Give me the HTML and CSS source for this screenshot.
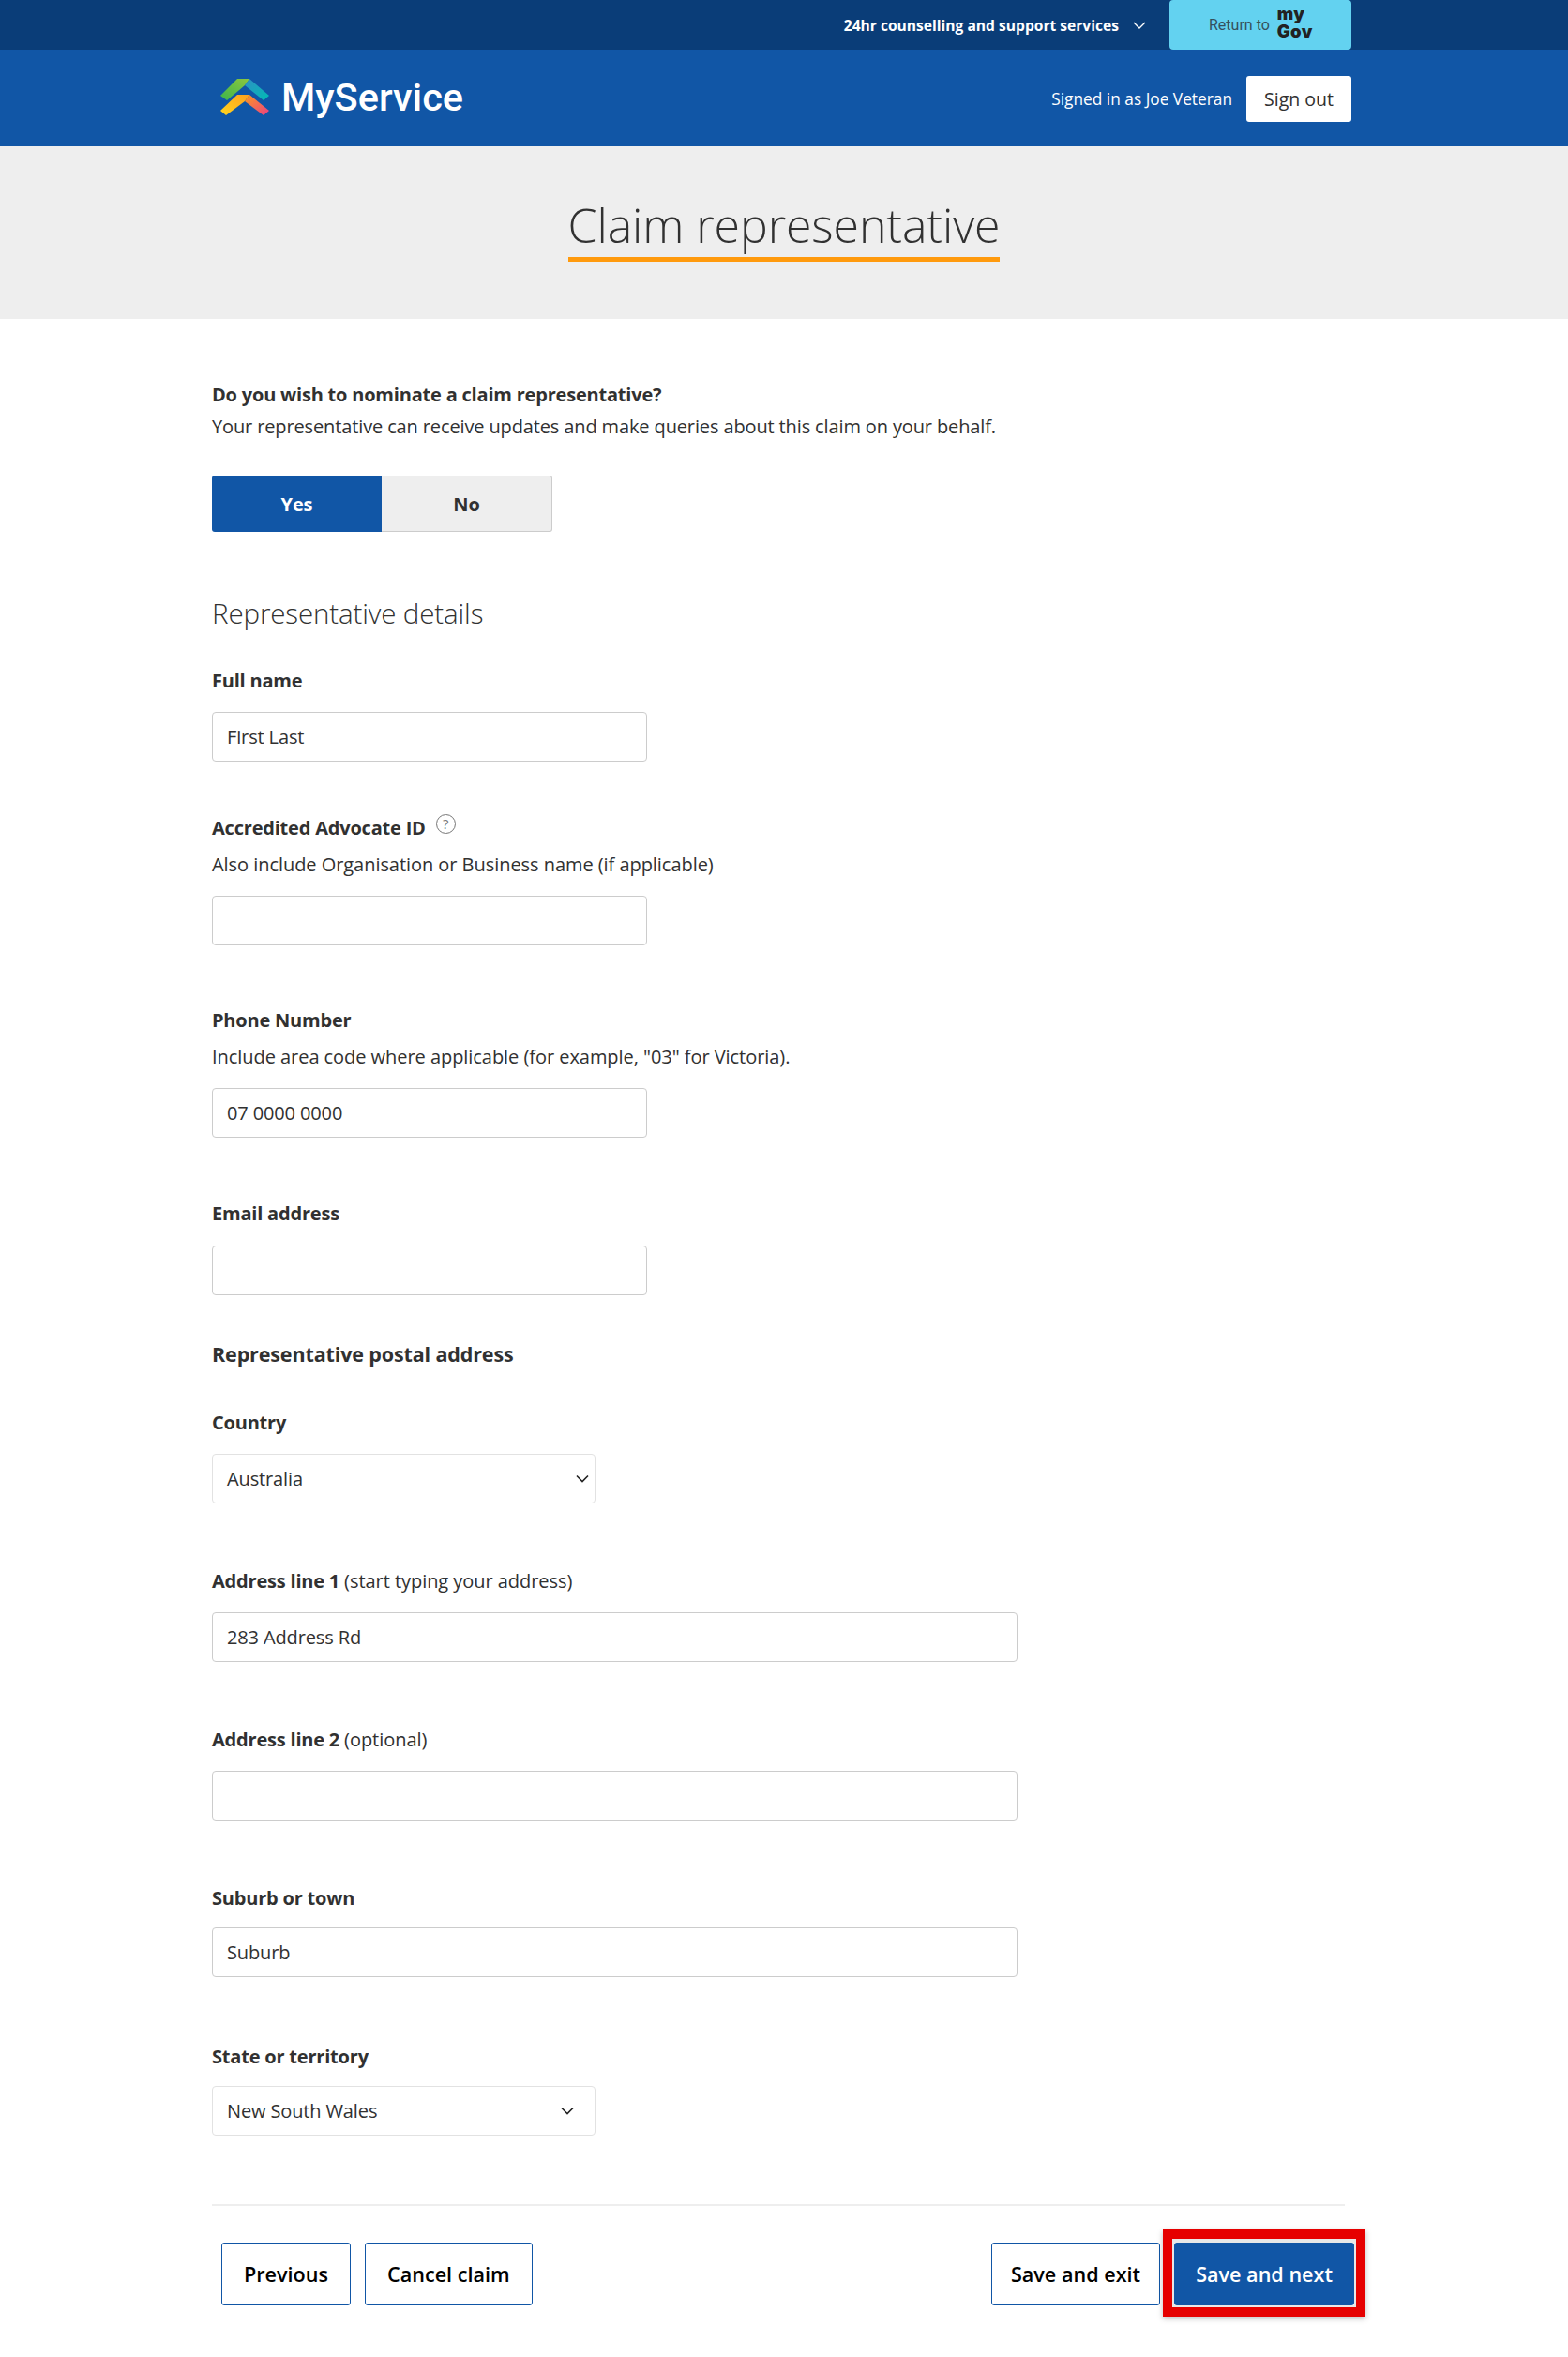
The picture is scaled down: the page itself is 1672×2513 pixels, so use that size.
FILE: index.html
```html
<!DOCTYPE html>
<html>
<head>
    <meta charset="UTF-8">
    <meta name="viewport" content="width=device-width, initial-scale=1.0">
    <title>Claim representative</title>
    <link rel="stylesheet" href="styles.css">
</head>
<body>
    <div class="top-bar">
        <span class="top-bar-link">24hr counselling and support services</span>
        <svg class="top-bar-chevron" width="14" height="8" viewBox="0 0 14 8"><path d="M1 1l6 6 6-6" fill="none" stroke="#fff" stroke-width="1.4"/></svg>
        <div class="return-button">
            <span class="return-text">Return to</span>
            <span class="mygov"><span>my</span><span>Gov</span></span>
        </div>
    </div>

    <div class="site-header">
        <div class="brand">
            <svg class="brand-logo" width="52" height="40" viewBox="0 0 52 40">
                <defs>
                    <linearGradient id="logoGreen" x1="0" y1="1" x2="1" y2="0"><stop offset="0" stop-color="#3cb54a"/><stop offset="1" stop-color="#8dc63f"/></linearGradient>
                    <linearGradient id="logoTeal" x1="0" y1="0" x2="1" y2="1"><stop offset="0" stop-color="#2f8fc4"/><stop offset="1" stop-color="#00bcb4"/></linearGradient>
                    <linearGradient id="logoYellow" x1="0" y1="1" x2="1" y2="0"><stop offset="0" stop-color="#ffd51e"/><stop offset="1" stop-color="#ffa01e"/></linearGradient>
                    <linearGradient id="logoPink" x1="0" y1="0" x2="1" y2="1"><stop offset="0" stop-color="#fb9a1f"/><stop offset="1" stop-color="#ea3f84"/></linearGradient>
                </defs>
                <polygon points="18,0 31,0 26,7 7,23 0,18" fill="url(#logoGreen)"/>
                <polygon points="31,0 52,18 46,23 26,7" fill="url(#logoTeal)"/>
                <polygon points="18,17 31,17 26,24 6,39 0,34" fill="url(#logoYellow)"/>
                <polygon points="31,17 52,34 46,39 26,24" fill="url(#logoPink)"/>
            </svg>
            <span class="brand-name">MyService</span>
        </div>
        <div class="user-area">
            <span class="signed-in">Signed in as Joe Veteran</span>
            <button class="sign-out">Sign out</button>
        </div>
    </div>

    <div class="page-title">
        <h1>Claim representative</h1>
    </div>

    <div class="content">
        <div class="question">
            <div class="label">Do you wish to nominate a claim representative?</div>
            <div class="help-text">Your representative can receive updates and make queries about this claim on your behalf.</div>
        </div>
        <div class="toggle">
            <div class="toggle-option toggle-active">Yes</div>
            <div class="toggle-option">No</div>
        </div>

        <h2 class="section-title">Representative details</h2>

        <div class="field field-full-name">
            <label class="label">Full name</label>
            <input class="text-input" type="text" value="First Last">
        </div>

        <div class="field field-advocate">
            <label class="label">Accredited Advocate ID <span class="help-icon">?</span></label>
            <div class="help-text">Also include Organisation or Business name (if applicable)</div>
            <input class="text-input" type="text">
        </div>

        <div class="field field-phone">
            <label class="label">Phone Number</label>
            <div class="help-text">Include area code where applicable (for example, "03" for Victoria).</div>
            <input class="text-input" type="text" value="07 0000 0000">
        </div>

        <div class="field field-email">
            <label class="label">Email address</label>
            <input class="text-input" type="text">
        </div>

        <h3 class="postal-title">Representative postal address</h3>

        <div class="field field-country">
            <label class="label">Country</label>
            <div class="select-box">
                <span>Australia</span>
                <svg class="select-chevron" width="14" height="9" viewBox="0 0 14 9"><path d="M1 1.5l6 6 6-6" fill="none" stroke="#222" stroke-width="1.6"/></svg>
            </div>
        </div>

        <div class="field field-address">
            <label class="label">Address line 1 <span class="label-note">(start typing your address)</span></label>
            <input class="text-input text-input-wide" type="text" value="283 Address Rd">
        </div>

        <div class="field field-address">
            <label class="label">Address line 2 <span class="label-note">(optional)</span></label>
            <input class="text-input text-input-wide" type="text">
        </div>

        <div class="field field-suburb">
            <label class="label">Suburb or town</label>
            <input class="text-input text-input-wide" type="text" value="Suburb">
        </div>

        <div class="field field-state">
            <label class="label">State or territory</label>
            <div class="select-box select-box-state">
                <span>New South Wales</span>
                <svg class="select-chevron" width="14" height="9" viewBox="0 0 14 9"><path d="M1 1.5l6 6 6-6" fill="none" stroke="#222" stroke-width="1.6"/></svg>
            </div>
        </div>

        <hr class="divider">

        <div class="actions">
            <div class="actions-group">
                <button class="action-button">Previous</button>
                <button class="action-button">Cancel claim</button>
            </div>
            <div class="actions-group">
                <button class="action-button action-exit">Save and exit</button>
                <div class="highlighted">
                    <button class="action-button action-primary">Save and next</button>
                </div>
            </div>
        </div>
    </div>
</body>
</html>
```

FILE: styles.css
```css
body {
    font-family: "Open Sans", Arial, sans-serif;
    font-size: 20px;
    letter-spacing: -0.13px;
    color: #313131;
    background-color: #fff;
    margin: 0;
    padding: 0;
}

.top-bar {
    background-color: #0a3d78;
    height: 53px;
    display: flex;
    align-items: center;
    justify-content: flex-end;
    padding-right: 231px;
}

.top-bar-link {
    color: #fff;
    font-size: 15.6px;
    font-weight: 700;
    letter-spacing: 0;
    margin-right: 15px;
}

.top-bar-chevron {
    margin-right: 25px;
}

.return-button {
    background-color: #63d2f0;
    width: 194px;
    height: 53px;
    box-sizing: border-box;
    padding-left: 42px;
    border-radius: 4px;
    display: flex;
    align-items: center;
    gap: 8px;
}

.return-text {
    font-family: Roboto, Arial, sans-serif;
    font-size: 16px;
    letter-spacing: 0;
    color: #35505c;
}

.mygov {
    font-family: Inter, Arial, sans-serif;
    font-size: 18.5px;
    font-weight: 900;
    letter-spacing: 0.3px;
    line-height: 19px;
    color: #222;
    display: flex;
    flex-direction: column;
    padding-bottom: 5px;
}

.site-header {
    background-color: #1156a6;
    height: 103px;
    display: flex;
    align-items: center;
    justify-content: space-between;
    padding: 0 231px 0 235px;
}

.brand {
    display: flex;
    align-items: center;
    gap: 13px;
    margin-bottom: 2px;
}

.brand-name {
    font-family: Roboto, Arial, sans-serif;
    font-size: 41.5px;
    font-weight: 500;
    letter-spacing: 0;
    color: #fff;
}

.user-area {
    display: flex;
    align-items: center;
    gap: 15px;
    margin-top: 1px;
}

.signed-in {
    color: #fff;
    font-size: 17.3px;
    letter-spacing: 0;
}

.sign-out {
    background-color: #fff;
    color: #313131;
    border: none;
    border-radius: 3px;
    width: 112px;
    height: 49px;
    font-family: inherit;
    font-size: 19.5px;
}

.page-title {
    background-color: #eee;
    height: 184px;
    display: flex;
    justify-content: center;
    padding-top: 50px;
    box-sizing: border-box;
}

.page-title h1 {
    margin: 0;
    font-size: 50px;
    font-weight: 300;
    letter-spacing: -0.1px;
    line-height: 68px;
    height: 68px;
    border-bottom: 5px solid #ff9a0d;
}

.content {
    padding: 66px 238px 0 226px;
}

.label {
    display: block;
    font-weight: 700;
    letter-spacing: -0.2px;
    line-height: 30px;
}

.help-text {
    line-height: 30px;
}

.question .help-text {
    margin-top: 4px;
}

.toggle {
    display: flex;
    width: 363px;
    height: 60px;
    margin-top: 37px;
}

.toggle-option {
    flex: 1;
    display: flex;
    align-items: center;
    justify-content: center;
    font-weight: 700;
    background-color: #eee;
    border: 1px solid #ccc;
    border-left: none;
    border-radius: 0 3px 3px 0;
}

.toggle-active {
    background-color: #1156a6;
    color: #fff;
    border: none;
    border-radius: 3px 0 0 3px;
}

.section-title {
    margin: 66px 0 0;
    font-size: 29.5px;
    font-weight: 300;
    line-height: 42px;
}

.field {
    display: flex;
    flex-direction: column;
}

.field .label {
    margin-bottom: 18px;
}

.field .label:has(+ .help-text) {
    margin-bottom: 9px;
}

.field .help-text {
    margin-bottom: 18px;
    letter-spacing: -0.05px;
}

.field-full-name {
    margin-top: 36px;
}

.field-advocate {
    margin-top: 56px;
}

.field-phone {
    margin-top: 65px;
}

.field-email {
    margin-top: 66px;
}

.field-email .label {
    margin-bottom: 19px;
}

.field-country {
    margin-top: 43px;
}

.field-address {
    margin-top: 68px;
}

.field-suburb {
    margin-top: 68px;
}

.field-suburb .label,
.field-state .label {
    margin-bottom: 16px;
}

.field-state {
    margin-top: 70px;
}

.label-note {
    font-weight: 400;
    letter-spacing: -0.05px;
}

.help-icon {
    display: inline-block;
    width: 19px;
    height: 19px;
    border: 1.5px solid #757575;
    border-radius: 50%;
    color: #757575;
    font-size: 15px;
    font-weight: 400;
    line-height: 19px;
    text-align: center;
    vertical-align: 6px;
    margin-left: 6px;
}

.text-input {
    width: 464px;
    height: 53px;
    box-sizing: border-box;
    border: 1px solid #ccc;
    border-radius: 4px;
    padding: 0 15px;
    font-family: inherit;
    font-size: 20px;
    letter-spacing: -0.13px;
    color: #313131;
}

.text-input-wide {
    width: 859px;
}

.postal-title {
    margin: 48px 0 0;
    font-size: 21.5px;
    font-weight: 700;
    line-height: 30px;
}

.select-box {
    width: 409px;
    height: 53px;
    box-sizing: border-box;
    border: 1px solid #e2e2e2;
    border-radius: 4px;
    padding: 0 6px 0 15px;
    display: flex;
    align-items: center;
    justify-content: space-between;
}

.select-box-state {
    padding-right: 22px;
}

.divider {
    border: none;
    height: 2px;
    background-color: #eee;
    margin: 73px 0 0;
}

.actions {
    display: flex;
    justify-content: space-between;
    padding: 39px 0 55px 10px;
    margin-right: -10px;
}

.actions-group {
    display: flex;
    gap: 15px;
}

.action-button {
    height: 67px;
    padding: 0 23px;
    background-color: #fff;
    border: 1.5px solid #1156a6;
    border-radius: 3px;
    color: #000;
    font-family: inherit;
    font-size: 21.6px;
    font-weight: 600;
}

.action-exit {
    padding: 0 20px;
}

.action-primary {
    position: relative;
    padding: 0 22px;
    background-color: #1156a6;
    color: #fff;
}

.highlighted {
    position: relative;
}

/* red annotation around the main button */
.highlighted::before {
    content: "";
    position: absolute;
    top: -14px;
    bottom: -12px;
    left: -12px;
    right: -12px;
    background-color: #e8e8e8;
    border: 10px solid #e60000;
    box-shadow: 0 2px 6px rgba(0, 0, 0, 0.25);
}
```
